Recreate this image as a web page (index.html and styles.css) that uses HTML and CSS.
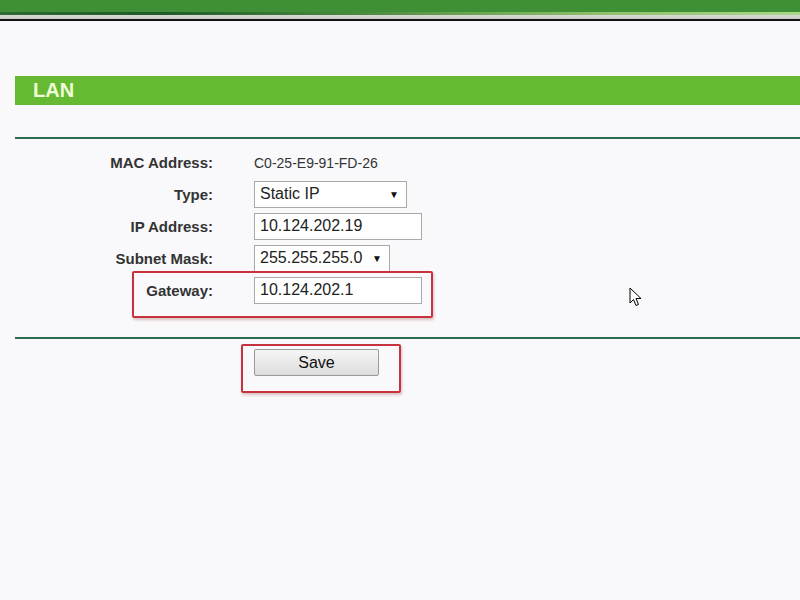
FILE: index.html
```html
<!DOCTYPE html>
<html>
    <head>
        <link rel="stylesheet" href="styles.css">
    </head>
    <body>
        <div class="top-bar">
            <div class="top-green"></div>
            <div class="top-dark"></div>
            <div class="top-grey"></div>
            <div class="top-line"></div>
        </div>

        <div class="page">
            <div class="section-title">LAN</div>
            <div class="rule"></div>

            <div class="form">
                <div class="row">
                    <div class="label">MAC Address:</div>
                    <div class="value">C0-25-E9-91-FD-26</div>
                </div>
                <div class="row">
                    <div class="label">Type:</div>
                    <div class="select select-type">
                        <span>Static IP</span>
                        <span class="arrow">&#9660;</span>
                    </div>
                </div>
                <div class="row">
                    <div class="label">IP Address:</div>
                    <div class="input">10.124.202.19</div>
                </div>
                <div class="row">
                    <div class="label">Subnet Mask:</div>
                    <div class="select select-mask">
                        <span>255.255.255.0</span>
                        <span class="arrow">&#9660;</span>
                    </div>
                </div>
                <div class="row row-marked">
                    <div class="label">Gateway:</div>
                    <div class="input">10.124.202.1</div>
                </div>
            </div>

            <div class="rule"></div>

            <div class="actions">
                <div class="save-wrap">
                    <button class="save-button">Save</button>
                </div>
            </div>
        </div>

        <svg class="cursor" width="14" height="22" viewBox="0 0 14 22">
            <path d="M1 1 L1 16 L4.5 12.5 L7 18.5 L9.5 17.5 L7 11.5 L12 11.5 Z"
                fill="#fff" stroke="#000" stroke-width="1" stroke-linejoin="round"/>
        </svg>
    </body>
</html>
```

FILE: styles.css
```css
* {
    margin: 0;
    padding: 0;
    box-sizing: border-box;
}

body {
    background: #f9f9fb;
    font-family: 'Liberation Sans', Arial, sans-serif;
    color: #222;
    width: 800px;
    height: 600px;
    overflow: hidden;
    position: relative;
}

.top-green {
    height: 12px;
    background: #3e8f36;
}

.top-dark {
    height: 3px;
    background: linear-gradient(90deg, #2d6a34 0%, #1f5a2a 20%, #4d8a3e 45%, #8fc06a 75%, #a8d88a 100%);
}

.top-grey {
    height: 4px;
    background: linear-gradient(180deg, #d8dad6, #c8cac6);
}

.top-line {
    height: 2px;
    background: #111;
}

.page {
    padding: 55px 0 0 15px;
}

.section-title {
    height: 29px;
    background: #66b932;
    color: #f0ffd8;
    font-size: 20px;
    font-weight: bold;
    line-height: 29px;
    padding-left: 18px;
}

.rule {
    height: 2px;
    background: #2c6e4e;
    margin-top: 32px;
}

.form {
    display: flex;
    flex-direction: column;
    gap: 6px;
    padding-top: 11px;
    padding-bottom: 34px;
}

.form + .rule {
    margin-top: 0;
}

.row {
    display: flex;
    align-items: center;
    height: 26px;
}

.row:first-child {
    height: 25px;
}

.label {
    width: 198px;
    text-align: right;
    font-size: 15px;
    font-weight: bold;
    color: #333;
}

.value {
    margin-left: 41px;
    font-size: 14px;
    color: #333;
}

.select,
.input {
    margin-left: 41px;
    height: 27px;
    border: 1px solid #a9a9a9;
    background: #fff;
    font-size: 16px;
    color: #222;
    display: flex;
    align-items: center;
    padding-left: 5px;
}

.select {
    justify-content: space-between;
    padding-right: 7px;
}

.select-type {
    width: 153px;
}

.select-mask {
    width: 136px;
}

.arrow {
    font-size: 10px;
    color: #111;
}

.input {
    width: 168px;
}

.row-marked {
    position: relative;
}

.row-marked::after {
    content: '';
    position: absolute;
    left: 117px;
    top: -6px;
    width: 297px;
    height: 43px;
    border: 2px solid #c8323c;
    border-radius: 2px;
    box-shadow: 1px 2px 3px rgba(120, 20, 20, 0.25);
}

.actions {
    padding: 10px 0 0 239px;
}

.save-wrap {
    position: relative;
    display: inline-block;
}

.save-wrap::after {
    content: '';
    position: absolute;
    left: -13px;
    top: -5px;
    width: 156px;
    height: 45px;
    border: 2px solid #c8323c;
    border-radius: 2px;
    box-shadow: 1px 2px 3px rgba(120, 20, 20, 0.25);
}

.save-button {
    width: 125px;
    height: 27px;
    border: 1px solid #9a9a9a;
    border-radius: 2px;
    background: linear-gradient(180deg, #f6f6f6, #dcdcdc);
    font-family: 'Liberation Sans', Arial, sans-serif;
    font-size: 16px;
    color: #111;
}

.cursor {
    position: absolute;
    left: 629px;
    top: 287px;
}
```
